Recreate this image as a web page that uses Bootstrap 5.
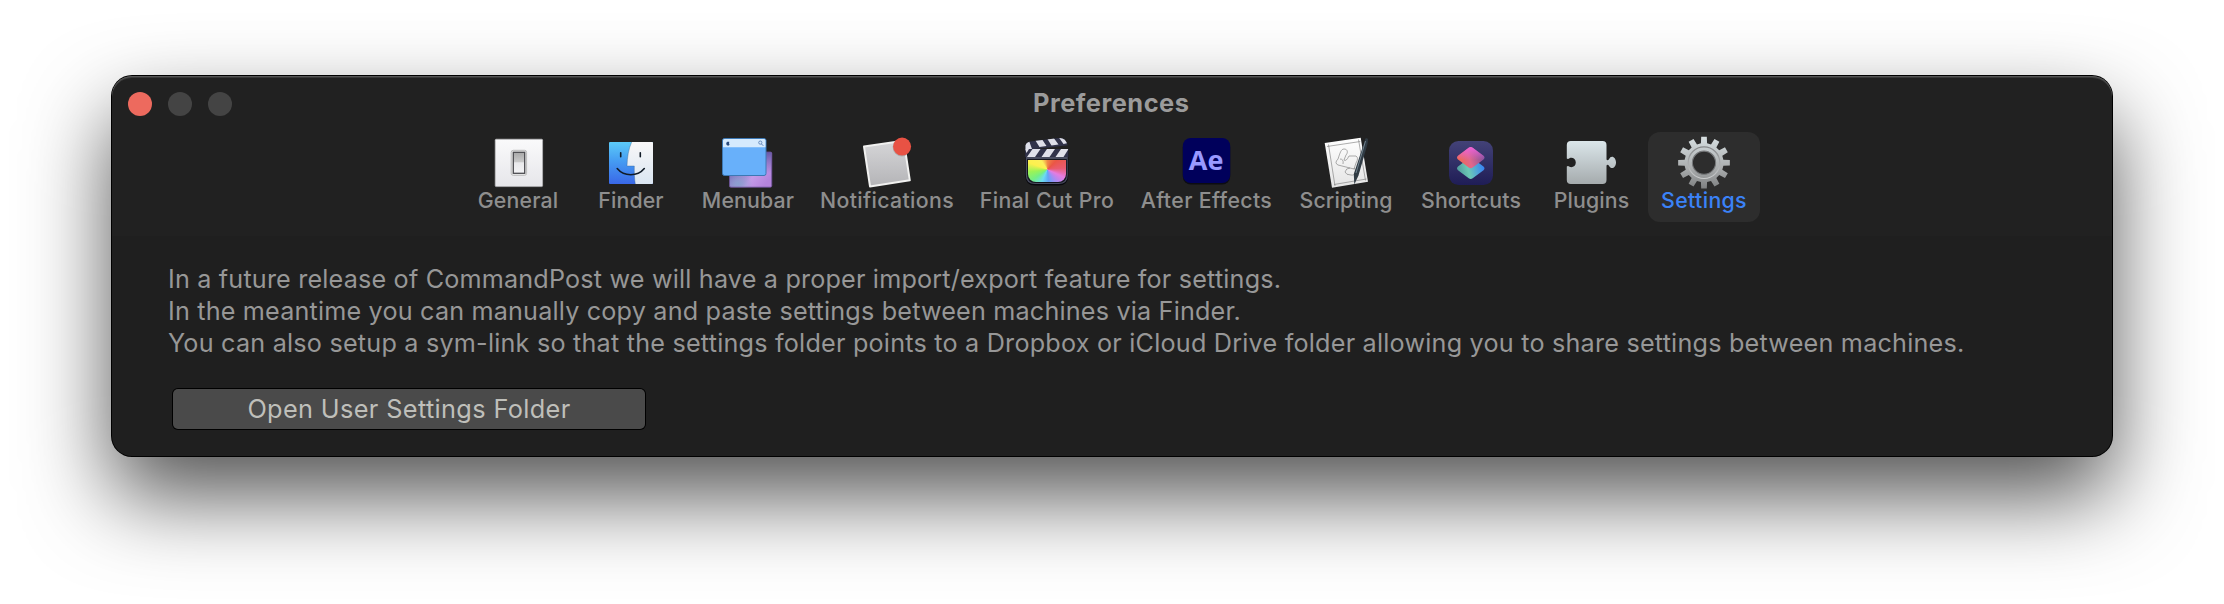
<!DOCTYPE html>
<html lang="en">
<head>
<meta charset="utf-8">
<title>Preferences</title>
<link href="https://cdn.jsdelivr.net/npm/bootstrap@5.3.0/dist/css/bootstrap.min.css" rel="stylesheet">
<style>
body{background:#fff;font-family:Inter,"Liberation Sans",sans-serif;overflow:hidden;height:604px}
.pref-window{width:2000px;height:380px;margin:76px 0 0 112px;border-radius:20px;background:#1f1f1f;box-shadow:0 0 0 1px #000,0 40px 86px rgba(0,0,0,.68)}
.pref-head{height:160px;background:#212121;border-radius:20px 20px 0 0;box-shadow:inset 0 1px 0 #555,inset 0 2px 0 #383838}
.titlebar{height:56px;padding-left:16px}
.light{width:24px;height:24px;border-radius:50%;background:#444}
.light.close-light{background:#ed6a5e}
.win-title{font-size:25.4px;font-weight:700;line-height:32px;letter-spacing:.5px;color:#9b9b9b;width:160px;margin-left:801px;margin-top:-3px;white-space:nowrap}
.tabs{padding-left:350px}
.tab{height:90px;border-radius:12px;color:#8e8e8e;font-size:21.3px;font-weight:500;line-height:26px;letter-spacing:.15px}
.tab.roomy{letter-spacing:.36px}
.tab svg{width:56px;height:56px;display:block;overflow:visible;letter-spacing:0}
.tab span{margin-top:-1px;white-space:nowrap}
.tab.current{background:#2d2d2d;color:#3b82f7}
.prose{padding:27px 0 0 56px;font-size:25.2px;line-height:32px;letter-spacing:.175px;color:#979797}
.prose div{white-space:nowrap}
.prose div:last-child{letter-spacing:.21px}
.open-btn{width:472px;height:40px;margin:30px 0 0 61px;border-radius:5px;background:#4a4a4a;box-shadow:0 0 0 1px #000;color:#bfbfba;font-size:25.3px;letter-spacing:.36px;line-height:40px;padding:0;border:0}
</style>
</head>
<body>
<main class="pref-window">
<header class="pref-head">
<div class="titlebar d-flex align-items-center">
<div class="d-flex gap-3"><i class="light close-light"></i><i class="light"></i><i class="light"></i></div>
<div class="win-title">Preferences</div>
</div>
<nav class="tabs d-flex">
<div class="tab d-flex flex-column align-items-center" style="width:112px">
<svg viewBox="0 0 56 56"><defs><linearGradient id="g1" x2="0" y2="1"><stop stop-color="#fafafb"/><stop offset="1" stop-color="#e6e6ea"/></linearGradient><linearGradient id="g2" x2="0" y2="1"><stop stop-color="#a8a8a8"/><stop offset=".45" stop-color="#c9c9c9"/><stop offset=".5" stop-color="#e9e9eb"/><stop offset="1" stop-color="#f3f3f5"/></linearGradient></defs>
<rect x="5.200" y="7.200" width="47.400" height="47.400" rx="1" fill="url(#g1)" stroke="#b9b9bb" stroke-width=".7"/><rect x="21.200" y="18.300" width="15.400" height="25" rx="2" fill="#ececec" stroke="#bbb" stroke-width="1"/><rect x="23.300" y="20.300" width="11.400" height="21" fill="url(#g2)" stroke="#4c4c50" stroke-width="1.300"/></svg>
<span>General</span></div>
<div class="tab d-flex flex-column align-items-center" style="width:114px">
<svg viewBox="0 0 56 56"><defs><linearGradient id="f1" x2="0" y2="1"><stop stop-color="#5ccbf8"/><stop offset=".45" stop-color="#459cf2"/><stop offset="1" stop-color="#3a68e8"/></linearGradient><linearGradient id="f2" x2="0" y2="1"><stop stop-color="#f8f7f8"/><stop offset="1" stop-color="#dbe6f2"/></linearGradient></defs>
<rect x="6" y="10" width="44" height="42" rx="1" fill="url(#f1)"/><path d="M28.700 10H49a1 1 0 0 1 1 1V51a1 1 0 0 1-1 1H32.300C31.400 47 31.200 40 31.300 34H24C24.300 25 25.500 17 28.700 10Z" fill="url(#f2)"/><path d="M28.700 10C25.500 17 24.300 25 24 34H31.300C31.200 40 31.400 47 32.300 52" fill="none" stroke="#35618f" stroke-opacity=".55" stroke-width=".7"/><path d="M17.700 20.800V24.800M37.300 20.800V24.800M14.200 36.500C21 44.800 34.500 44.800 41.300 36.500" fill="none" stroke="#111b27" stroke-width="1.600" stroke-linecap="round"/></svg>
<span>Finder</span></div>
<div class="tab d-flex flex-column align-items-center" style="width:120px">
<svg viewBox="0 0 56 56"><defs><linearGradient id="m1" x2="1" y2=".7"><stop stop-color="#55538f"/><stop offset=".35" stop-color="#7e6ebb"/><stop offset=".7" stop-color="#c49be8"/><stop offset="1" stop-color="#b584dc"/></linearGradient><radialGradient id="m2" cx=".2" cy=".9" r=".35"><stop stop-color="#8aa0cf"/><stop offset="1" stop-color="#8aa0cf" stop-opacity="0"/></radialGradient><linearGradient id="m3" x2="0" y2="1"><stop stop-color="#675aa8"/><stop offset=".6" stop-color="#675aa8" stop-opacity="0"/></linearGradient></defs>
<rect x="9.500" y="20" width="42.300" height="35.200" rx="1.500" fill="url(#m1)"/><rect x="9.500" y="20" width="42.300" height="35.200" fill="url(#m2)"/><rect x="9.500" y="20" width="42.300" height="35.200" rx="1.500" fill="url(#m3)" stroke="#6b4f96" stroke-width=".8"/>
<rect x="2.500" y="6.500" width="43.500" height="37" rx="2" fill="#68b0fa" stroke="#3c78b4" stroke-width="1"/><path d="M3 15.300V8.500Q3 7 4.500 7H44Q45.500 7 45.500 8.500V15.300Z" fill="#d5eafd"/><path d="M7.500 9.700c-1.600.3-1.700 3.400.1 3.900 1.300.2 1.800-.5 1.900-1.400-.8-.7-.6-1.600 0-2.100-.8-.6-1.300-.2-2-.4Z" fill="#294a7c"/><circle cx="40.300" cy="10.600" r="1.600" fill="none" stroke="#416ba8" stroke-width=".7"/><path d="m41.500 12 1.800 1.800" stroke="#416ba8" stroke-width=".8"/></svg>
<span>Menubar</span></div>
<div class="tab roomy d-flex flex-column align-items-center" style="width:158px">
<svg viewBox="0 0 56 56"><defs><linearGradient id="n1" x2="0" y2="1"><stop stop-color="#d6d6d8"/><stop offset="1" stop-color="#b4b4b7"/></linearGradient></defs>
<path d="M5 14.600 44.800 8.800 50.800 48.300 11 54.400Z" fill="url(#n1)" stroke="#f1f1f0" stroke-width="2" stroke-linejoin="round"/><circle cx="43" cy="15" r="9.400" fill="#000" opacity=".15"/><circle cx="43.100" cy="14.600" r="9" fill="#e85244"/></svg>
<span>Notifications</span></div>
<div class="tab roomy d-flex flex-column align-items-center" style="width:162px">
<svg viewBox="0 0 56 56"><defs><clipPath id="c1"><path d="M6.500 17.500V13.500Q7 10.500 11 9.500L40 6Q46.500 5.500 48.700 13.300L12 17.500Z"/></clipPath><clipPath id="c2"><path d="M6.300 17H49.300V25H6.300Z"/></clipPath></defs>
<path d="M6.300 17H49.300V43.500Q49.300 53.500 39.300 53.500H16.300Q6.300 53.500 6.300 43.500Z" fill="#08080d"/><path d="M6.800 17H48.800V43Q48.800 52 39.500 52H16Q6.800 52 6.800 43Z" fill="#494d60"/><path d="M8 27H47.800V42.500Q47.800 51 39.500 51H16.500Q8 51 8 42.500Z" fill="#15161f"/>
<g clip-path="url(#c1)"><path d="M5 4H51V19H5Z" fill="#31334a"/><path d="M9 6 13 17 6 18 3 12ZM15.500 7 22.500 6.500 27.500 14 20.500 15ZM27.500 5.500 34 5 39.500 12.500 32.500 13.500ZM39.500 5 46.500 4.500 51.500 10.500 44.500 12Z" fill="#dedfe9"/></g>
<g clip-path="url(#c2)"><path d="M6 17H50V25H6Z" fill="#31334a"/><path d="M6 17H10L7.500 21ZM13.500 17H21.500L16 25H8ZM28 17H36L30.500 25H22.500ZM42 17H49.500L44.500 25H36.500Z" fill="#e0e1ea"/></g>
<foreignObject x="9" y="27.700" width="38" height="22.500"><div xmlns="http://www.w3.org/1999/xhtml" style="width:38px;height:22.5px;border-radius:0 0 8px 8px;background:conic-gradient(from 0deg at 51% 43%,#f08a45,#ea5645 45deg,#ea5b6f 85deg,#e57ce0 115deg,#a58cf4 145deg,#62a5f6 175deg,#6cdcf2 205deg,#73ef86 235deg,#9cf356 262deg,#fdf04e 290deg,#fdf05c 325deg,#f08a45)"></div></foreignObject></svg>
<span>Final Cut Pro</span></div>
<div class="tab roomy d-flex flex-column align-items-center" style="width:157px">
<svg viewBox="0 0 56 56"><rect x="3.800" y="7.500" width="47.400" height="45" rx="8" fill="#0c0c12"/><rect x="3.800" y="6" width="47.400" height="45" rx="8" fill="#00005b"/><text x="9.800" y="37.700" font-family="Open Sans" font-weight="700" font-size="27.500" textLength="34.600" lengthAdjust="spacingAndGlyphs" fill="#9999ff">Ae</text></svg>
<span>After Effects</span></div>
<div class="tab d-flex flex-column align-items-center" style="width:122px">
<svg viewBox="0 0 56 56"><defs><linearGradient id="s1" x2="0" y2="1"><stop stop-color="#fff"/><stop offset="1" stop-color="#e4e4e4"/></linearGradient></defs>
<path d="M6.700 11 42.700 5.700 50 49.700 14 55.700Z" fill="url(#s1)"/><g fill="none" stroke="#777" stroke-width=".6"><path d="M9 14.500 42.300 9.500M16 52.500 48.500 47M10.500 12.500 17 54M40.500 7.500 47.500 48.500"/><path d="M20 27C22 21 23 17 26 17C30 17 30 21 28 23L26 28Q28 30 31 24H38Q41 26 38 31L36 37L20 33Q16 31 20 27ZM22 27Q26 27 25 32M36 36C39 39 37 44 33 43Q28 43 27 40Q28 36 32 36"/></g>
<path d="M47.500 6.500Q49.500 5.500 50 7.500L49.500 12 40.500 43.500 36.300 52.500 35.800 42Z" fill="#303b44"/><path d="M47.500 9 38 41" stroke="#71818c" stroke-width="1"/></svg>
<span>Scripting</span></div>
<div class="tab d-flex flex-column align-items-center" style="width:128px">
<svg viewBox="0 0 56 56"><defs><linearGradient id="h1" x2="0" y2="1"><stop stop-color="#434277"/><stop offset="1" stop-color="#1f1d56"/></linearGradient><linearGradient id="h2" x1="0" y1=".65" x2="1" y2=".4"><stop stop-color="#f0684a"/><stop offset=".45" stop-color="#e0688c"/><stop offset="1" stop-color="#7a4f9e"/></linearGradient><linearGradient id="h3" x1="0" y1=".6" x2="1" y2=".4"><stop stop-color="#4f9a9c"/><stop offset=".4" stop-color="#6cc9b5"/><stop offset="1" stop-color="#3480f8"/></linearGradient><linearGradient id="h4" x2="0" y2="1"><stop stop-color="#ee62d8"/><stop offset=".6" stop-color="#ee62d8" stop-opacity="0"/></linearGradient></defs>
<rect x="6" y="9" width="44" height="44" rx="9.500" fill="url(#h1)"/><path d="M25.700 26.500Q27.700 25 29.700 26.500L40.500 34.500Q42.500 36.300 40.500 38.200L29.700 46.200Q27.700 47.700 25.700 46.200L15 38.200Q13 36.300 15 34.500Z" fill="url(#h3)"/><path d="M25.700 15.800Q27.700 14.300 29.700 15.800L40.500 23.800Q42.500 25.700 40.500 27.600L29.700 35.600Q27.700 37.100 25.700 35.600L15 27.600Q13 25.700 15 23.800Z" fill="url(#h2)"/><path d="M25.700 15.800Q27.700 14.300 29.700 15.800L40.500 23.800Q42.500 25.700 40.500 27.600L29.700 35.600Q27.700 37.100 25.700 35.600L15 27.600Q13 25.700 15 23.800Z" fill="url(#h4)"/></svg>
<span>Shortcuts</span></div>
<div class="tab d-flex flex-column align-items-center" style="width:113px">
<svg viewBox="0 0 56 56"><defs><linearGradient id="p1" x2="0" y2="1"><stop stop-color="#dbe6ea"/><stop offset="1" stop-color="#a5abad"/></linearGradient></defs>
<path d="M6.800 9H38.500Q42.500 9 42.500 13V27.500Q43.500 29 45 27.300C47 22.500 52 25 52 30.500S47 38 45 33.700Q43.500 32 42.500 33.500V48Q42.500 52 38.500 52H6.800Q2.800 52 2.800 48V34.500Q4 33.500 5.500 34.800C8.500 36 11.800 34 11.800 30.500S8.500 25 5.500 26.200Q4 27.500 2.800 26.500V13Q2.800 9 6.800 9Z" fill="url(#p1)"/></svg>
<span>Plugins</span></div>
<div class="tab current roomy d-flex flex-column align-items-center" style="width:112px">
<svg viewBox="0 0 56 56"><defs><linearGradient id="w1" gradientUnits="userSpaceOnUse" x1="0" y1="5" x2="0" y2="57"><stop stop-color="#d6dee0"/><stop offset=".6" stop-color="#aaadae"/><stop offset="1" stop-color="#7d7f80"/></linearGradient><linearGradient id="w2" x2="0" y2="1"><stop stop-color="#858789"/><stop offset="1" stop-color="#c9cbcc"/></linearGradient></defs>
<path id="gear" fill="url(#w1)" fill-rule="evenodd"/><circle cx="28" cy="30.700" r="15.800" fill="none" stroke="url(#w2)" stroke-width="1.200"/><circle cx="28" cy="30.700" r="11.600" fill="none" stroke="#77797b" stroke-width="1.100"/></svg>
<span>Settings</span></div>
</nav>
</header>
<section class="prose"><div>In a future release of CommandPost we will have a proper import/export feature for settings.</div><div>In the meantime you can manually copy and paste settings between machines via Finder.</div><div>You can also setup a sym-link so that the settings folder points to a Dropbox or iCloud Drive folder allowing you to share settings between machines.</div></section>
<button class="btn open-btn d-block">Open User Settings Folder</button>
</main>
<script src="https://cdn.jsdelivr.net/npm/bootstrap@5.3.0/dist/js/bootstrap.bundle.min.js"></script>
<script>
// twelve tapered teeth round a ring
const pts=[];
for(let i=0;i<12;i++){for(const [a,r] of [[-9,19.6],[-6.2,26],[6.2,26],[9,19.6]]){const t=(i*30+a-90)*Math.PI/180;pts.push((28+r*Math.cos(t)).toFixed(2)+' '+(30.7+r*Math.sin(t)).toFixed(2));}}
document.getElementById('gear').setAttribute('d','M'+pts.join('L')+'ZM39.600 30.700A11.600 11.600 0 1 0 16.400 30.700A11.600 11.600 0 1 0 39.600 30.700Z');
</script>
</body>
</html>
